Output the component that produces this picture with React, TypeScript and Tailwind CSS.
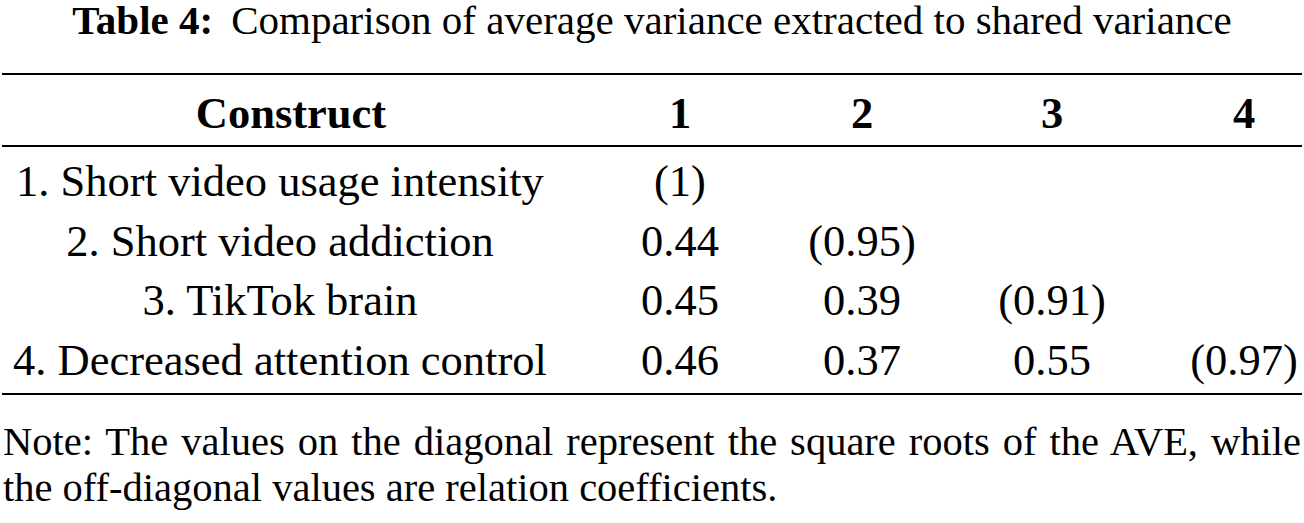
const rows = [
  { label: "1. Short video usage intensity", values: ["(1)", "", "", ""] },
  { label: "2. Short video addiction", values: ["0.44", "(0.95)", "", ""] },
  { label: "3. TikTok brain", values: ["0.45", "0.39", "(0.91)", ""] },
  { label: "4. Decreased attention control", values: ["0.46", "0.37", "0.55", "(0.97)"] },
];

const cols = "grid grid-cols-[556px_244px_120px_260px_124px]";

export default function App() {
  return (
    <div className="w-[1304px] h-[523px] bg-white text-black font-[Liberation_Serif] overflow-hidden">
      {/* Caption */}
      <div className="text-center text-[41px] leading-[40px] whitespace-nowrap">
        <span className="font-bold">Table 4:</span>
        <span className="ml-[18px]">Comparison of average variance extracted to shared variance</span>
      </div>

      {/* Table */}
      <div className="mt-[33px] mx-[2px] border-t-2 border-b-2 border-black text-[44.5px]">
        <div className={`${cols} border-b-2 border-black font-bold leading-[68px] pt-[4px] h-[72px]`}>
          <div className="text-center pl-[22px]">Construct</div>
          <div className="text-center">1</div>
          <div className="text-center">2</div>
          <div className="text-center">3</div>
          <div className="text-center">4</div>
        </div>
        <div className="pt-[5px] pb-[3px]">
          {rows.map((row) => (
            <div key={row.label} className={`${cols} leading-[59.5px] whitespace-nowrap`}>
              <div className="text-center">{row.label}</div>
              {row.values.map((v, i) => (
                <div key={i} className="text-center">
                  {v}
                </div>
              ))}
            </div>
          ))}
        </div>
      </div>

      {/* Note */}
      <div className="mt-[24px] mx-[3px] text-[40.5px] leading-[46px]">
        <p className="text-justify [text-align-last:justify] whitespace-nowrap">
          Note: The values on the diagonal represent the square roots of the AVE, while
        </p>
        <p>the off-diagonal values are relation coefficients.</p>
      </div>
    </div>
  );
}
